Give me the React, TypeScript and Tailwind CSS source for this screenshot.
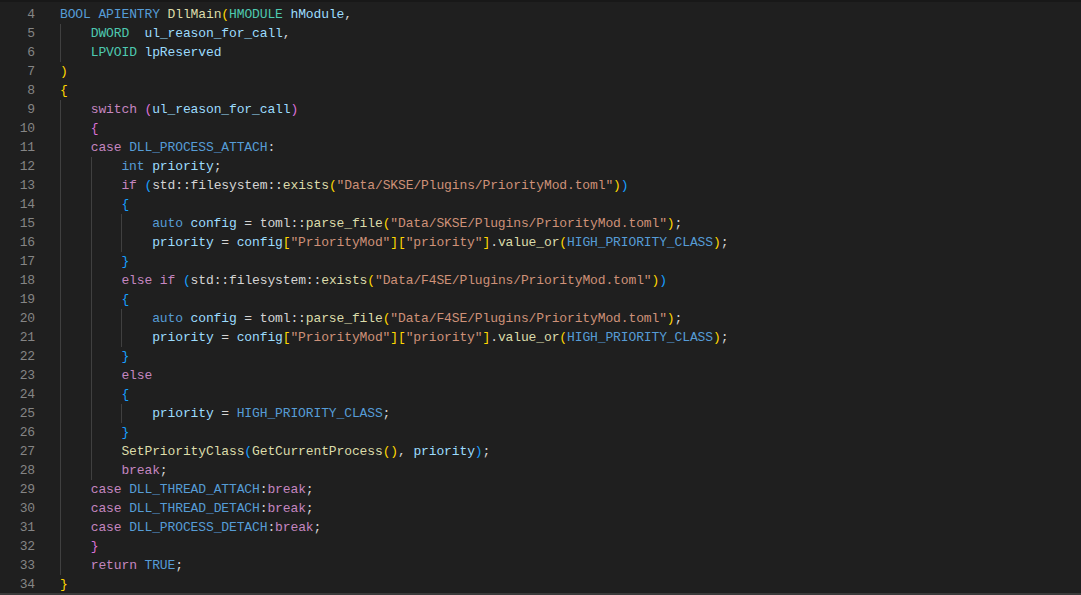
import React from 'react';

type Tok = [string, string?];
type Line = { n: number; g: number; ind: number; toks: Tok[] };

// token colours (Dark+ with bracket pair colours)
const colors: Record<string, string> = {
  p: 'text-[#d4d4d4]',
  k: 'text-[#569cd6]',
  c: 'text-[#c586c0]',
  t: 'text-[#4ec9b0]',
  f: 'text-[#dcdcaa]',
  v: 'text-[#9cdcfe]',
  s: 'text-[#ce9178]',
  b1: 'text-[#ffd700]',
  b2: 'text-[#da70d6]',
  b3: 'text-[#179fff]',
};

const existsLine = (kw: Tok[], dir: string): Tok[] => [
  ...kw,
  ['(', 'b3'], ['std::filesystem::'], ['exists', 'f'],
  ['(', 'b1'], [`"Data/${dir}/Plugins/PriorityMod.toml"`, 's'], [')', 'b1'], [')', 'b3'],
];

const parseLine = (dir: string): Tok[] => [
  ['auto', 'k'], [' '], ['config', 'v'], [' = toml::'], ['parse_file', 'f'],
  ['(', 'b1'], [`"Data/${dir}/Plugins/PriorityMod.toml"`, 's'], [')', 'b1'], [';'],
];

const valueLine: Tok[] = [
  ['priority', 'v'], [' = '], ['config', 'v'], ['[', 'b1'], ['"PriorityMod"', 's'], [']', 'b1'],
  ['[', 'b1'], ['"priority"', 's'], [']', 'b1'], ['.'], ['value_or', 'f'], ['(', 'b1'],
  ['HIGH_PRIORITY_CLASS', 'k'], [')', 'b1'], [';'],
];

const caseBreak = (name: string): Tok[] => [
  ['case', 'c'], [' '], [name, 'k'], [':'], ['break', 'c'], [';'],
];

const lines: Line[] = [
  { n: 4, g: 0, ind: 0, toks: [['BOOL', 'k'], [' '], ['APIENTRY', 'k'], [' '], ['DllMain', 'f'], ['(', 'b1'], ['HMODULE', 't'], [' '], ['hModule', 'v'], [',']] },
  { n: 5, g: 1, ind: 1, toks: [['DWORD', 't'], ['  '], ['ul_reason_for_call', 'v'], [',']] },
  { n: 6, g: 1, ind: 1, toks: [['LPVOID', 't'], [' '], ['lpReserved', 'v']] },
  { n: 7, g: 0, ind: 0, toks: [[')', 'b1']] },
  { n: 8, g: 0, ind: 0, toks: [['{', 'b1']] },
  { n: 9, g: 1, ind: 1, toks: [['switch', 'c'], [' '], ['(', 'b2'], ['ul_reason_for_call', 'v'], [')', 'b2']] },
  { n: 10, g: 1, ind: 1, toks: [['{', 'b2']] },
  { n: 11, g: 1, ind: 1, toks: [['case', 'c'], [' '], ['DLL_PROCESS_ATTACH', 'k'], [':']] },
  { n: 12, g: 2, ind: 2, toks: [['int', 'k'], [' '], ['priority', 'v'], [';']] },
  { n: 13, g: 2, ind: 2, toks: existsLine([['if', 'c'], [' ']], 'SKSE') },
  { n: 14, g: 2, ind: 2, toks: [['{', 'b3']] },
  { n: 15, g: 3, ind: 3, toks: parseLine('SKSE') },
  { n: 16, g: 3, ind: 3, toks: valueLine },
  { n: 17, g: 2, ind: 2, toks: [['}', 'b3']] },
  { n: 18, g: 2, ind: 2, toks: existsLine([['else', 'c'], [' '], ['if', 'c'], [' ']], 'F4SE') },
  { n: 19, g: 2, ind: 2, toks: [['{', 'b3']] },
  { n: 20, g: 3, ind: 3, toks: parseLine('F4SE') },
  { n: 21, g: 3, ind: 3, toks: valueLine },
  { n: 22, g: 2, ind: 2, toks: [['}', 'b3']] },
  { n: 23, g: 2, ind: 2, toks: [['else', 'c']] },
  { n: 24, g: 2, ind: 2, toks: [['{', 'b3']] },
  { n: 25, g: 3, ind: 3, toks: [['priority', 'v'], [' = '], ['HIGH_PRIORITY_CLASS', 'k'], [';']] },
  { n: 26, g: 2, ind: 2, toks: [['}', 'b3']] },
  { n: 27, g: 2, ind: 2, toks: [['SetPriorityClass', 'f'], ['(', 'b3'], ['GetCurrentProcess', 'f'], ['(', 'b1'], [')', 'b1'], [','], [' '], ['priority', 'v'], [')', 'b3'], [';']] },
  { n: 28, g: 2, ind: 2, toks: [['break', 'c'], [';']] },
  { n: 29, g: 1, ind: 1, toks: caseBreak('DLL_THREAD_ATTACH') },
  { n: 30, g: 1, ind: 1, toks: caseBreak('DLL_THREAD_DETACH') },
  { n: 31, g: 1, ind: 1, toks: caseBreak('DLL_PROCESS_DETACH') },
  { n: 32, g: 1, ind: 1, toks: [['}', 'b2']] },
  { n: 33, g: 1, ind: 1, toks: [['return', 'c'], [' '], ['TRUE', 'k'], [';']] },
  { n: 34, g: 0, ind: 0, toks: [['}', 'b1']] },
];

const App: React.FC = () => {
  return (
    <main
      className="w-full h-[595px] overflow-hidden bg-[#1f1f1f] border-t-2 border-b-2 border-t-[#181818] border-b-[#3a3a3a] pt-[3px] text-[13px] leading-[19px] tracking-[-0.12px] whitespace-pre"
      style={{ fontFamily: '"Liberation Mono", "DejaVu Sans Mono", monospace' }}
    >
      {lines.map((line) => (
        <div key={line.n} className="flex h-[19px] items-center">
          <span className="w-[35px] text-right text-[#858585]">{line.n}</span>
          <span className="w-[25px]" />
          {Array.from({ length: line.ind }).map((_, i) => (
            <span
              key={i}
              className={
                i < line.g
                  ? 'inline-block h-[19px] w-[30.72px] shrink-0 shadow-[inset_1px_0_0_#404040]'
                  : 'inline-block h-[19px] w-[30.72px] shrink-0'
              }
            />
          ))}
          <span>
            {line.toks.map(([text, c], i) => (
              <span key={i} className={colors[c ?? 'p']}>
                {text}
              </span>
            ))}
          </span>
        </div>
      ))}
    </main>
  );
};

export default App;
